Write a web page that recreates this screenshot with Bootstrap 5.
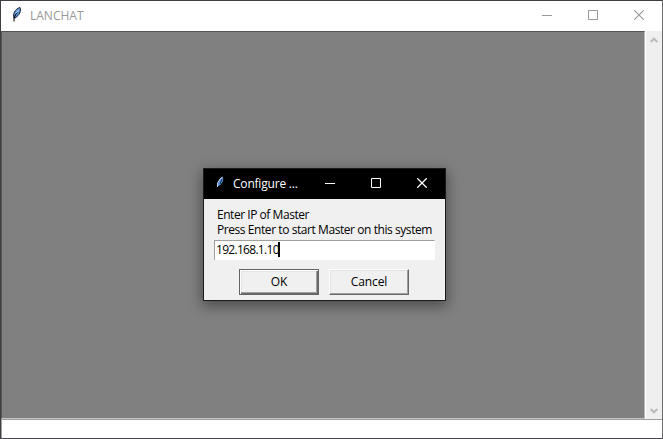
<!DOCTYPE html>
<html lang="en">
<head>
<meta charset="utf-8">
<title>LANCHAT</title>
<link href="https://cdn.jsdelivr.net/npm/bootstrap@5.3.0/dist/css/bootstrap.min.css" rel="stylesheet">
<style>
body{font-family:"Open Sans","Noto Sans",sans-serif;font-size:12px;line-height:15px;color:#000}
svg{display:block}
.app-window{width:663px;height:439px;background:#fff;border:1px solid #403d44;border-right-color:#6b6b6b;border-bottom-color:#4c4950}
.app-title{height:30px;color:#999;padding-left:10px}
.title-text{margin-left:8px;padding-bottom:2px;letter-spacing:0}
.win-btn{width:46px;height:30px;padding:0;display:flex;align-items:center;justify-content:center;border:0;background:none;color:inherit}
.app-title .win-btn{width:46px;padding-bottom:2px}
.chat-view{background:#808080;border-top:1px solid #555;border-left:1px solid #555;border-right:1px solid #b8b8b8;border-bottom:1px solid #c3c3c3}
.scroll-track{width:17px;background:#efefef;border-left:1px solid #fff;color:#b9b9b9;padding:6px 0 5px}
.message-entry{height:19px;border:0;border-top:1px solid #a0a0a0;border-left:1px solid #a0a0a0;outline:0;border-radius:0;padding:0 3px}
.ip-dialog{left:203px;top:168px;width:243px;height:133px;background:#f0f0f0;border:1px solid #1b1b1b;box-shadow:0 4px 13px 1px rgba(0,0,0,.42)}
.dialog-title{height:30px;background:#000;color:#fff;padding-left:12px}
.dialog-title .title-text{margin-left:8px;letter-spacing:-.2px}
.dialog-title .win-btn{padding-bottom:2px}
.dialog-body{padding:8px 10px 0}
.prompt-text{padding-left:3px;white-space:nowrap;letter-spacing:-.43px}
.prompt-first{letter-spacing:-.46px}
.ip-field{height:20px;margin-top:3px;background:#fff;border-top:1px solid #a0a0a0;border-left:1px solid #a0a0a0;border-right:1px solid #fff;padding:0 0 2px 1px}
.ip-value{letter-spacing:-.7px}
.caret{width:2px;height:15px;background:#000;margin-left:-1px}
.dialog-actions{gap:10px;margin-top:9px;padding-left:25px}
.push-btn{width:80px;height:26px;padding:0 0 2px;font:inherit;letter-spacing:-.1px;color:#000;background:#f0f0f0;border:1px solid;border-color:#fff #696969 #696969 #fff;box-shadow:inset -1px -1px #a0a0a0,inset 1px 1px #e3e3e3}
.push-default{border-color:#646464;box-shadow:inset 1px 1px #fff,inset -1px -1px #696969,inset -2px -2px #a0a0a0,inset 2px 2px #e3e3e3}
</style>
<script src="https://cdn.jsdelivr.net/npm/bootstrap@5.3.0/dist/js/bootstrap.bundle.min.js"></script>
</head>
<body class="overflow-hidden">
<main class="app-window position-relative d-flex flex-column">
  <header class="app-title d-flex align-items-center flex-shrink-0">
    <svg class="mb-1" width="11" height="16" viewBox="0 0 11 16"><path d="M3 12C1.500 8 4 3 9 1.500c1.500 3-.5 8-5 10.500Z" fill="#5b93d8" stroke="#111b2b"/><path d="M3 15.500V12L6 6" fill="none" stroke="#000"/><path d="M4.500 7.500 8 3.500" stroke="#b9d6f8"/></svg>
    <span class="title-text">LANCHAT</span>
    <div class="d-flex ms-auto">
      <button class="win-btn" aria-label="Minimize"><svg width="10" height="10"><path d="M0 5.500H10" stroke="currentColor"/></svg></button>
      <button class="win-btn" aria-label="Maximize"><svg width="10" height="10"><path d="M.5.5h9v9h-9Z" fill="none" stroke="currentColor"/></svg></button>
      <button class="win-btn" aria-label="Close"><svg width="10" height="10"><path d="m.3.300 9.400 9.400m0-9.400-9.400 9.400" stroke="currentColor" stroke-width="1.100"/></svg></button>
    </div>
  </header>
  <section class="d-flex flex-grow-1">
    <div class="chat-view flex-grow-1"></div>
    <div class="scroll-track d-flex flex-column justify-content-between align-items-center">
      <svg width="8" height="7"><path d="m.7 5 3.300-3.300L7.300 5" fill="none" stroke="currentColor" stroke-width="2"/></svg>
      <svg width="8" height="7"><path d="m.7 2 3.300 3.300L7.300 2" fill="none" stroke="currentColor" stroke-width="2"/></svg>
    </div>
  </section>
  <input class="message-entry w-100 flex-shrink-0" aria-label="Message">
</main>
<div class="ip-dialog position-absolute" role="dialog">
  <div class="dialog-title d-flex align-items-center">
    <svg class="mb-1" width="9" height="13" viewBox="0 0 9 13"><path d="M2 10C1.500 6 3.500 2 7 1c.8 3-.7 7-4.500 9Z" fill="#5b93d8"/><path d="M1.500 11V7L4 3 6.500 1" fill="none" stroke="#d5e7ff" stroke-width=".9"/><path d="m4 8 2-5" stroke="#15283f"/></svg>
    <span class="title-text">Configure ...</span>
    <div class="d-flex ms-auto">
      <button class="win-btn" aria-label="Minimize"><svg width="10" height="10"><path d="M0 5.500H10" stroke="currentColor"/></svg></button>
      <button class="win-btn" aria-label="Maximize"><svg width="10" height="10"><path d="M.5.5h9v9h-9Z" fill="none" stroke="currentColor"/></svg></button>
      <button class="win-btn" aria-label="Close"><svg width="10" height="10"><path d="m.3.300 9.400 9.400m0-9.400-9.400 9.400" stroke="currentColor" stroke-width="1.300"/></svg></button>
    </div>
  </div>
  <div class="dialog-body">
    <div class="prompt-text"><span class="prompt-first">Enter IP of Master</span><br>Press Enter to start Master on this system</div>
    <div class="ip-field d-flex align-items-center"><span class="ip-value">192.168.1.10</span><span class="caret"></span></div>
    <div class="dialog-actions d-flex">
      <button class="push-btn push-default">OK</button>
      <button class="push-btn">Cancel</button>
    </div>
  </div>
</div>
</body>
</html>
